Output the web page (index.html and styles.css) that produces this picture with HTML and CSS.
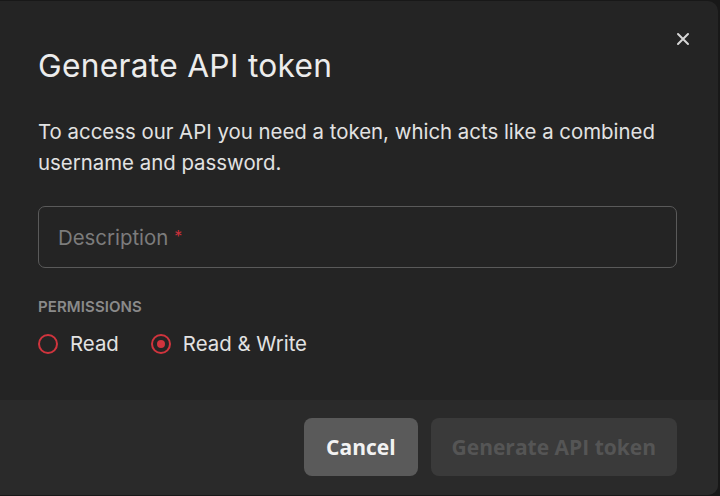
FILE: index.html
```html
<!DOCTYPE html>
<html lang="en">
<head>
    <meta charset="UTF-8">
    <title>Generate API token</title>
    <link rel="stylesheet" href="styles.css">
</head>
<body>
    <div class="modal">
        <button class="close" aria-label="Close">
            <svg width="14" height="14" viewBox="0 0 14 14"><path d="M2 2L12 12M12 2L2 12" stroke="#d6d6d6" stroke-width="2" stroke-linecap="round"/></svg>
        </button>
        <div class="modal-body">
            <h1 class="title">Generate API token</h1>
            <p class="intro">To access our API you need a token, which acts like a combined username and password.</p>
            <div class="field">
                <span class="placeholder">Description</span><span class="req">*</span>
            </div>
            <div class="label">Permissions</div>
            <div class="radios">
                <label class="radio"><span class="dot"></span>Read</label>
                <label class="radio checked"><span class="dot"></span>Read &amp; Write</label>
            </div>
        </div>
        <div class="modal-footer">
            <button class="btn btn-cancel">Cancel</button>
            <button class="btn btn-primary" disabled>Generate API token</button>
        </div>
    </div>
</body>
</html>
```

FILE: styles.css
```css
body {
    margin: 0;
    background: #181818;
    font-family: Inter, "Noto Sans", sans-serif;
    color: #e6e6e6;
    overflow: hidden;
}
.modal {
    position: relative;
    width: 730px;
    height: 494px;
    margin: 1px 0 0 -12px;
    background: #242424;
    border-radius: 10px;
    display: flex;
    flex-direction: column;
    overflow: hidden;
}
.close {
    position: absolute;
    top: 31px;
    right: 28px;
    padding: 0;
    border: none;
    background: none;
    width: 14px;
    height: 14px;
}
.modal-body {
    flex: 1;
    padding: 45px 41px 0 50px;
}
.title {
    margin: 0;
    font-size: 31.7px;
    font-weight: 400;
    line-height: 40px;
    color: #ececec;
    letter-spacing: 0.3px;
}
.intro {
    margin: 30px 0 0;
    font-size: 20.4px;
    line-height: 31px;
    color: #e2e2e2;
}
.field {
    margin-top: 28px;
    height: 60px;
    border: 1px solid #5a5a5a;
    border-radius: 7px;
    display: flex;
    align-items: center;
    padding: 0 19px;
    font-size: 20.4px;
}
.placeholder {
    color: #7c7c7c;
}
.req {
    color: #c9303a;
    margin-left: 6px;
    font-size: 16px;
    align-self: flex-start;
    margin-top: 19px;
}
.label {
    margin-top: 29px;
    font-size: 15px;
    font-weight: 600;
    text-transform: uppercase;
    color: #8a8a8a;
    letter-spacing: 0.1px;
}
.radios {
    display: flex;
    gap: 32px;
    margin-top: 15px;
}
.radio {
    display: flex;
    align-items: center;
    gap: 12px;
    font-size: 20.4px;
    color: #e2e2e2;
}
.dot {
    width: 16px;
    height: 16px;
    border: 2px solid #d0343d;
    border-radius: 50%;
    display: flex;
    align-items: center;
    justify-content: center;
}
.checked .dot::after {
    content: "";
    width: 8px;
    height: 8px;
    border-radius: 50%;
    background: #d0343d;
}
.modal-footer {
    height: 95px;
    background: #2a2a2a;
    display: flex;
    justify-content: flex-end;
    align-items: flex-start;
    gap: 13px;
    padding: 18px 41px 0 0;
    box-sizing: border-box;
}
.btn {
    height: 58px;
    border: none;
    border-radius: 8px;
    font-family: "Open Sans", Inter, sans-serif;
    font-size: 21px;
    font-weight: 700;
    padding: 0 21px;
}
.btn-cancel {
    background: #5a5a5a;
    color: #f2f2f2;
    padding: 0 22px;
}
.btn-primary {
    background: #3a3a3a;
    color: #555555;
}
```
